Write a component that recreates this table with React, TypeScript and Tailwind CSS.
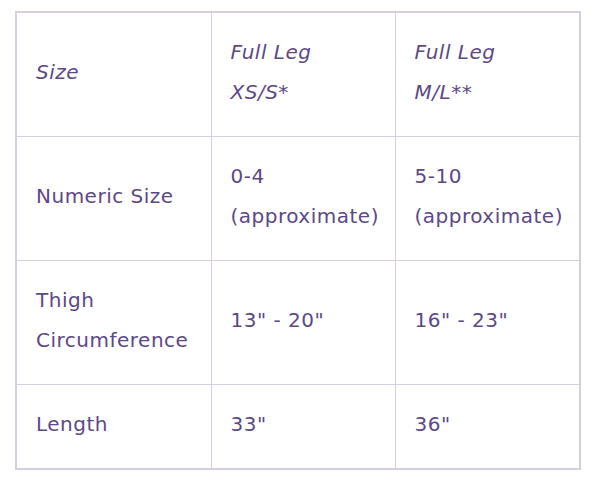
const rows: [string, string[], string[]][] = [
  ["Numeric Size", ["0-4", "(approximate)"], ["5-10", "(approximate)"]],
  ["Thigh Circumference", ["13\" - 20\""], ["16\" - 23\""]],
  ["Length", ["33\""], ["36\""]],
];

const cell =
  "border border-[#d8cee2] px-[19px] pt-[18.5px] pb-[24.5px] align-middle text-left font-normal";

export default function App() {
  return (
    <div className="bg-white pl-[15px] pt-[11px] w-[600px] h-[487px] font-['DejaVu_Sans',sans-serif] text-[20px] leading-[40px] tracking-[0.025em] text-[#5d4886]">
      <table className="border-collapse border-2 border-[#d8cee2] w-[564px] table-fixed">
        <colgroup>
          <col className="w-[195px]" />
          <col className="w-[184px]" />
          <col className="w-[185px]" />
        </colgroup>
        <thead>
          <tr>
            <th className={cell + " italic"}>Size</th>
            <th className={cell + " italic"}>
              Full Leg
              <br />
              XS/S*
            </th>
            <th className={cell + " italic"}>
              Full Leg
              <br />
              M/L**
            </th>
          </tr>
        </thead>
        <tbody>
          {rows.map(([label, a, b]) => (
            <tr key={label}>
              <td className={cell}>
                {label === "Thigh Circumference" ? (
                  <>
                    Thigh
                    <br />
                    Circumference
                  </>
                ) : (
                  label
                )}
              </td>
              <td className={cell}>
                {a.map((t, i) => (
                  <div key={i}>{t}</div>
                ))}
              </td>
              <td className={cell}>
                {b.map((t, i) => (
                  <div key={i}>{t}</div>
                ))}
              </td>
            </tr>
          ))}
        </tbody>
      </table>
    </div>
  );
}
